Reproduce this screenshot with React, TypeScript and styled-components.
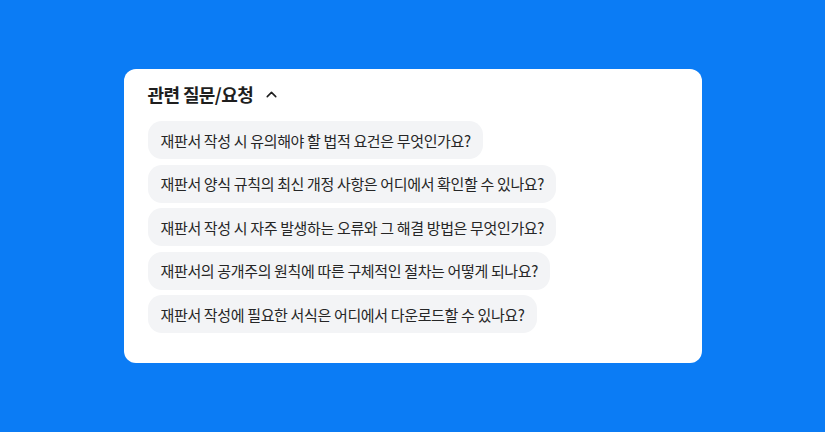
import { ChevronUp } from 'lucide-react';
import styled, { createGlobalStyle } from 'styled-components';

const GlobalStyle = createGlobalStyle`
  html, body {
    margin: 0;
    padding: 0;
    background: #0b7cf5;
  }
  body {
    font-family: "Noto Sans CJK KR", "Noto Sans", sans-serif;
    color: #222;
  }
`;

const Page = styled.div`
  width: 825px;
  height: 432px;
  display: flex;
  justify-content: center;
  padding-top: 69px;
  box-sizing: border-box;
`;

const Card = styled.div`
  width: 578px;
  height: 294px;
  background: #fff;
  border-radius: 12px;
  padding: 12px 24px 0;
  box-sizing: border-box;
`;

const Header = styled.button`
  display: flex;
  align-items: center;
  gap: 10px;
  border: 0;
  background: none;
  padding: 0;
  font-family: inherit;
  font-size: 18px;
  font-weight: 600;
  color: #1e1e1e;
  letter-spacing: -0.6px;
  height: 22px;
  margin-top: 2px;
`;

const List = styled.div`
  display: flex;
  flex-direction: column;
  align-items: flex-start;
  gap: 5.5px;
  margin-top: 16px;
`;

const Pill = styled.button`
  border: 0;
  background: #f3f4f6;
  border-radius: 14px;
  height: 38px;
  padding: 0 12px 0 13px;
  font-family: inherit;
  font-size: 15px;
  color: #262626;
  letter-spacing: -0.35px;
`;

const questions = [
  '재판서 작성 시 유의해야 할 법적 요건은 무엇인가요?',
  '재판서 양식 규칙의 최신 개정 사항은 어디에서 확인할 수 있나요?',
  '재판서 작성 시 자주 발생하는 오류와 그 해결 방법은 무엇인가요?',
  '재판서의 공개주의 원칙에 따른 구체적인 절차는 어떻게 되나요?',
  '재판서 작성에 필요한 서식은 어디에서 다운로드할 수 있나요?',
];

const App = () => {
  return (
    <>
      <GlobalStyle />
      <Page>
        <Card>
          <Header>
            관련 질문/요청
            <ChevronUp size={17} strokeWidth={2.2} />
          </Header>
          <List>
            {questions.map((q) => (
              <Pill key={q}>{q}</Pill>
            ))}
          </List>
        </Card>
      </Page>
    </>
  );
};

export default App;
